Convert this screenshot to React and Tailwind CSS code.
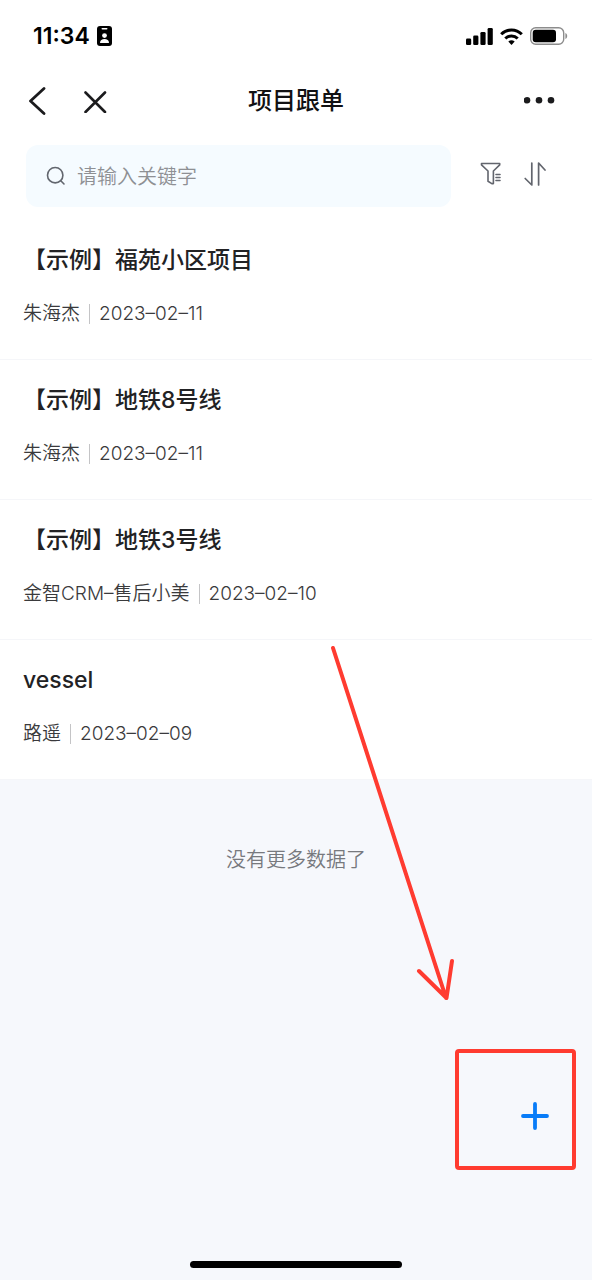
import { useState } from 'react';

const PROJECTS = [
  { id: 1, title: '【示例】福苑小区项目', owner: '朱海杰', date: '2023–02–11' },
  { id: 2, title: '【示例】地铁8号线', owner: '朱海杰', date: '2023–02–11' },
  { id: 3, title: '【示例】地铁3号线', owner: '金智CRM–售后小美', date: '2023–02–10' },
  { id: 4, title: 'vessel', owner: '路遥', date: '2023–02–09' },
];

const StatusBar = () => (
  <div className="flex h-[72px] items-center justify-between pl-[33px] pr-6">
    <div className="flex items-center gap-[7px]">
      <span className="text-[23px] leading-8 font-semibold text-black">11:34</span>
      <svg width="15" height="20" viewBox="0 0 15 20" aria-hidden="true">
        <rect width="15" height="20" rx="3" fill="#000" />
        <rect x="4.5" y="2" width="6" height="1.6" rx="0.8" fill="#fff" />
        <circle cx="7.5" cy="9.6" r="2.4" fill="#fff" />
        <path d="M3 17c0-3 2-4 4.500-4s4.500 1 4.500 4z" fill="#fff" />
      </svg>
    </div>
    <div className="flex items-center gap-[7px]">
      <svg width="27" height="17" viewBox="0 0 27 17" aria-hidden="true">
        <rect x="0" y="10.500" width="5.200" height="6.500" rx="1.300" />
        <rect x="7.200" y="7.500" width="5.200" height="9.500" rx="1.300" />
        <rect x="14.400" y="4" width="5.200" height="13" rx="1.300" />
        <rect x="21.600" y="0" width="5.200" height="17" rx="1.300" />
      </svg>
      <svg width="23" height="17" viewBox="0 0 23 17" fill="none" stroke="#000" strokeWidth="3" aria-hidden="true">
        <path d="M1.200 6.200a14.600 14.600 0 0 1 20.600 0" />
        <path d="M5.300 10.500a8.800 8.800 0 0 1 12.400 0" />
        <path d="M11.500 17 8.300 13.600q3.200-2.600 6.400 0z" fill="#000" stroke="none" />
      </svg>
      <svg width="38" height="18" viewBox="0 0 38 18" aria-hidden="true">
        <rect x="0.700" y="0.700" width="33" height="16.600" rx="5" fill="none" stroke="#8c8c8c" strokeWidth="1.400" />
        <rect x="2.700" y="2.700" width="23.300" height="12.600" rx="3" fill="#000" />
        <path d="M35.400 6v6c2.400-.8 2.400-5.200 0-6z" fill="#8c8c8c" />
      </svg>
    </div>
  </div>
);

const NavBar = () => (
  <header className="grid h-[58px] grid-cols-3 items-center px-7">
    <div className="flex items-center gap-9">
      <button type="button" aria-label="返回">
        <svg width="19" height="28" viewBox="0 0 19 28" fill="none" stroke="#1b1b1d" strokeWidth="2.800" strokeLinecap="round" strokeLinejoin="round">
          <path d="M16 1.500 2.500 14 16 26.500" />
        </svg>
      </button>
      <button type="button" aria-label="关闭">
        <svg width="24" height="24" viewBox="0 0 24 24" fill="none" stroke="#1b1b1d" strokeWidth="2.600" strokeLinecap="round">
          <path d="M2.500 3.500 22 23M22 3.500 2.500 23" />
        </svg>
      </button>
    </div>
    <h1 className="text-center text-2xl font-medium text-[#111113]">项目跟单</h1>
    <button type="button" aria-label="更多" className="mr-2 justify-self-end">
      <svg width="32" height="8" viewBox="0 0 32 8" fill="#1b1b1d">
        <circle cx="3" cy="3.300" r="3.300" />
        <circle cx="15" cy="3.300" r="3.300" />
        <circle cx="27" cy="3.300" r="3.300" />
      </svg>
    </button>
  </header>
);

const SearchBar = ({ value, onChange }) => (
  <div className="flex items-center pt-[15px] pr-[45px] pb-[13px] pl-[26px]">
    <label className="flex h-[62px] min-w-0 flex-1 items-center gap-[11px] rounded-xl bg-[#f5fbff] px-5">
      <svg width="20" height="20" viewBox="0 0 20 20" fill="none" stroke="#62666e" strokeWidth="1.600" strokeLinecap="round" className="shrink-0">
        <circle cx="9.200" cy="9.200" r="7.700" />
        <path d="m14.800 14.800 3.200 3.200" />
      </svg>
      <input
        type="text"
        value={value}
        onChange={(e) => onChange(e.target.value)}
        placeholder="请输入关键字"
        aria-label="搜索"
        className="min-w-0 flex-1 bg-transparent pt-0.5 text-xl font-[350] outline-none placeholder:text-[#8e9094]"
      />
    </label>
    <div className="mb-1 ml-7 flex items-center gap-5">
      <button type="button" aria-label="筛选">
        <svg width="24" height="24" viewBox="0 0 24 24" fill="none" stroke="#62656d" strokeWidth="1.600" strokeLinecap="round" strokeLinejoin="round">
          <path d="M2.500 1.500h18.200v1.400L14.400 9v12.600h-1.600L9 19.300V9L2.500 2.900z" />
          <path d="M17 12.500h4M17 15.500h4M17 18.500h4" />
        </svg>
      </button>
      <button type="button" aria-label="排序">
        <svg width="24" height="24" viewBox="0 0 24 24" fill="none" stroke="#62656d" strokeWidth="1.700" strokeLinecap="round" strokeLinejoin="round">
          <path d="M8.800 1v22L2.200 16.500" />
          <path d="M15.600 23V1l6.400 7" />
        </svg>
      </button>
    </div>
  </div>
);

const ProjectRow = ({ project }) => (
  <li className="border-b border-[#f5f6f9] px-[23px] pt-6 pb-[31px]">
    <h2 className="text-[23px] leading-8 font-medium text-[#222224]">{project.title}</h2>
    <div className="mt-6 flex items-center gap-[9px] text-[19px] leading-7 font-[350] text-[#3a3a3c]">
      <span>{project.owner}</span>
      <span className="h-5 w-px bg-[#c4c4c6]" />
      <time>{project.date}</time>
    </div>
  </li>
);

const App = () => {
  const [keyword, setKeyword] = useState('');
  const visible = PROJECTS.filter((p) => p.title.includes(keyword.trim()));

  return (
    <div className="relative flex min-h-screen flex-col overflow-hidden bg-[#f6f8fc] font-['Inter','Noto_Sans_CJK_SC',sans-serif]">
      <div className="bg-white">
        <StatusBar />
        <NavBar />
        <SearchBar value={keyword} onChange={setKeyword} />
        <ul>
          {visible.map((p) => (
            <ProjectRow key={p.id} project={p} />
          ))}
        </ul>
      </div>

      <p className="mt-16 text-center text-xl leading-8 font-[350] text-[#77797e]">没有更多数据了</p>

      {/* guide arrow pointing at the add button */}
      <svg className="pointer-events-none absolute right-32 bottom-[270px]" width="144" height="370" viewBox="0 0 144 370" fill="none" stroke="#ff3b30" strokeWidth="4" strokeLinecap="round" strokeLinejoin="round" aria-hidden="true">
        <path d="M13 8 126 358M99 331l27.500 27L132 321" />
      </svg>
      <div className="absolute right-4 bottom-[110px] flex h-[121px] w-[121px] items-center justify-end rounded-sm border-4 border-[#ff3b30] pt-3 pr-[23px]">
        <button type="button" aria-label="新建" className="rounded-full">
          <svg width="28" height="28" viewBox="0 0 28 28" stroke="#087cf8" strokeWidth="3.800" strokeLinecap="round">
            <path d="M14 2v24M2 14h24" />
          </svg>
        </button>
      </div>

      <div className="mt-auto flex justify-center pb-3">
        <div className="h-[7px] w-[212px] rounded-full bg-black" />
      </div>
    </div>
  );
};

export default App;
